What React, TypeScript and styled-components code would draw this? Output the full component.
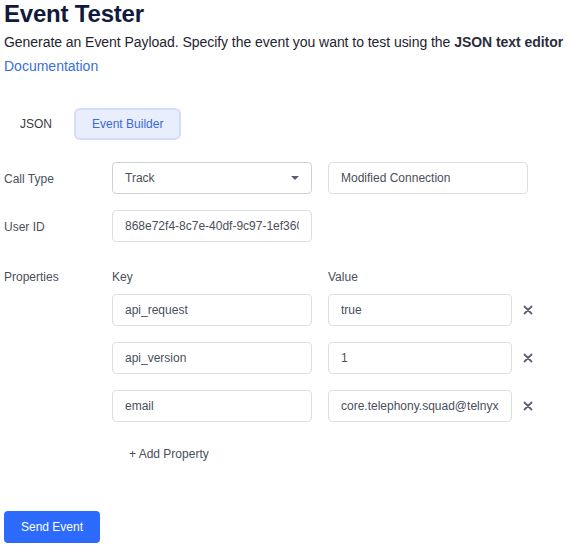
import React from "react";
import styled, { createGlobalStyle } from "styled-components";

const Global = createGlobalStyle`
  html, body { margin: 0; padding: 0; background: #fff; }
  body { font-family: "Liberation Sans", Arial, sans-serif; }
  * { box-sizing: border-box; }
`;

const Page = styled.div`
  padding: 0 4px;
  display: flex;
  flex-direction: column;
`;

const Title = styled.h1`
  margin: 0;
  font-size: 24px;
  line-height: 28px;
  font-weight: 700;
  letter-spacing: -0.2px;
  color: #111a3b;
`;

const Subtitle = styled.p`
  margin: 4px 0 0;
  font-size: 14px;
  line-height: 20px;
  letter-spacing: -0.05px;
  color: #1f2430;
  white-space: nowrap;
  b { font-weight: 700; color: #2a2f3b; }
`;

const DocLink = styled.a`
  margin-top: 4px;
  font-size: 14px;
  line-height: 20px;
  color: #3a6fd6;
  text-decoration: none;
  align-self: flex-start;
`;

const Tabs = styled.div`
  display: flex;
  gap: 6px;
  margin-top: 32px;
`;

const Tab = styled.button<{ $active?: boolean }>`
  height: 32px;
  padding: 0 16px;
  font-family: inherit;
  font-size: 12px;
  border-radius: 6px;
  border: ${(p) => (p.$active ? "2px solid #d3ddf8" : "none")};
  background: ${(p) => (p.$active ? "#e9eefd" : "transparent")};
  color: ${(p) => (p.$active ? "#3a6ad4" : "#3a3d45")};
  cursor: pointer;
`;

const Form = styled.div`
  display: grid;
  grid-template-columns: 108px auto;
  row-gap: 16px;
  margin-top: 22px;
  align-items: center;
`;

const Label = styled.div<{ $top?: boolean }>`
  font-size: 12px;
  line-height: 20px;
  padding-top: 1px;
  color: #4a4f5c;
  align-self: ${(p) => (p.$top ? "start" : "center")};
`;

const Row = styled.div`
  display: flex;
  gap: 16px;
  align-items: center;
`;

const Field = styled.div<{ $w?: number }>`
  width: ${(p) => p.$w ?? 200}px;
  height: 32px;
  border: 1px solid #dcdee5;
  border-radius: 4px;
  padding: 0 12px;
  display: flex;
  align-items: center;
  justify-content: space-between;
  font-size: 12px;
  color: #4a4f5c;
  overflow: hidden;
  white-space: nowrap;
  background: #fff;
`;

const SelectField = styled(Field)`
  border-color: #cfd2da;
`;

const Clip = styled.span`
  overflow: hidden;
  white-space: nowrap;
`;

const Caret = styled.span`
  width: 0;
  height: 0;
  border-left: 4px solid transparent;
  border-right: 4px solid transparent;
  border-top: 4px solid #5b6070;
`;

const Props = styled.div`
  display: flex;
  flex-direction: column;
  margin-top: 8px;
`;

const Headers = styled.div`
  display: flex;
  gap: 16px;
  font-size: 12px;
  line-height: 20px;
  padding-top: 1px;
  color: #4a4f5c;
  margin-bottom: 7px;
`;

const Header = styled.div`
  width: 200px;
`;

const PropRows = styled.div`
  display: flex;
  flex-direction: column;
  gap: 16px;
`;

const PropRow = styled.div`
  display: flex;
  align-items: center;
`;

const KeyGap = styled.div`
  width: 16px;
`;

const Remove = styled.button`
  width: 32px;
  height: 32px;
  border: none;
  background: transparent;
  padding: 0;
  display: flex;
  align-items: center;
  justify-content: center;
  cursor: pointer;
`;

const AddProperty = styled.button`
  margin-top: 16px;
  align-self: flex-start;
  height: 32px;
  padding: 0 17px;
  border: none;
  background: transparent;
  font-family: inherit;
  font-size: 12px;
  color: #4a4f5c;
  cursor: pointer;
`;

const SendButton = styled.button`
  margin-top: 41px;
  align-self: flex-start;
  width: 96px;
  height: 32px;
  border: none;
  border-radius: 4px;
  background: #2c6bfe;
  color: #fff;
  font-family: inherit;
  font-size: 12px;
  cursor: pointer;
`;

const XIcon = () => (
  <svg width="10" height="10" viewBox="0 0 10 10">
    <path d="M1.5 1.5 L8.5 8.5 M8.5 1.5 L1.5 8.5" stroke="#5d6072" strokeWidth="1.8" strokeLinecap="round" />
  </svg>
);

const rows = [
  { k: "api_request", v: "true" },
  { k: "api_version", v: "1" },
  { k: "email", v: "core.telephony.squad@telnyx.com" },
];

export default function App() {
  return (
    <>
      <Global />
      <Page>
        <Title>Event Tester</Title>
        <Subtitle>
          Generate an Event Payload. Specify the event you want to test using the <b>JSON text editor</b>
        </Subtitle>
        <DocLink href="#">Documentation</DocLink>
        <Tabs>
          <Tab>JSON</Tab>
          <Tab $active>Event Builder</Tab>
        </Tabs>
        <Form>
          <Label>Call Type</Label>
          <Row>
            <SelectField>
              <Clip>Track</Clip>
              <Caret />
            </SelectField>
            <Field>
              <Clip>Modified Connection</Clip>
            </Field>
          </Row>
          <Label>User ID</Label>
          <Row>
            <Field>
              <Clip>868e72f4-8c7e-40df-9c97-1ef360a2b1c4</Clip>
            </Field>
          </Row>
          <Label $top style={{ marginTop: 8 }}>Properties</Label>
          <Props>
            <Headers>
              <Header>Key</Header>
              <Header>Value</Header>
            </Headers>
            <PropRows>
              {rows.map((r) => (
                <PropRow key={r.k}>
                  <Field>
                    <Clip>{r.k}</Clip>
                  </Field>
                  <KeyGap />
                  <Field $w={184}>
                    <Clip>{r.v}</Clip>
                  </Field>
                  <Remove aria-label="Remove">
                    <XIcon />
                  </Remove>
                </PropRow>
              ))}
            </PropRows>
            <AddProperty>+ Add Property</AddProperty>
          </Props>
        </Form>
        <SendButton>Send Event</SendButton>
      </Page>
    </>
  );
}
